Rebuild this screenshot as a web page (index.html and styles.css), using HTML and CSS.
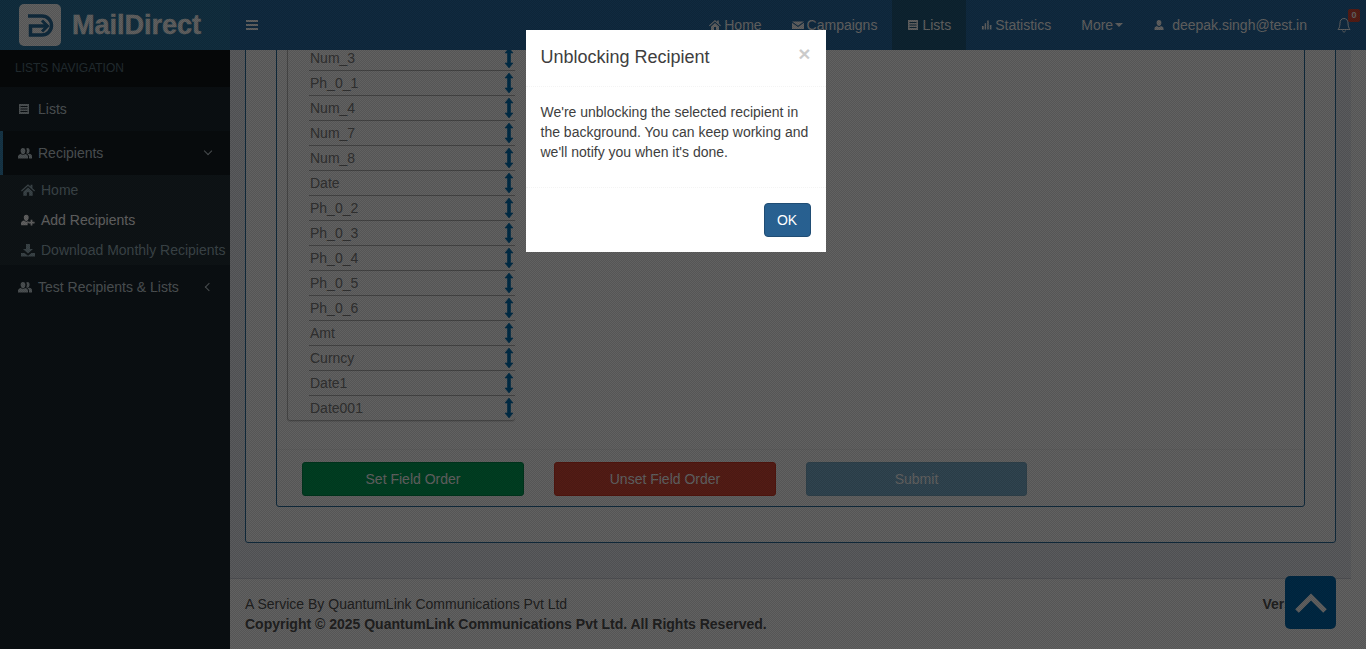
FILE: index.html
```html
<!DOCTYPE html>
<html lang="en">
<head>
    <meta charset="UTF-8">
    <meta name="viewport" content="width=device-width, initial-scale=1.0">
    <title>MailDirect - Lists</title>
    <link rel="stylesheet" href="styles.css">
</head>
<body>

    <svg class="defs" width="0" height="0">
        <symbol id="i-home" viewBox="0 0 12 12"><path d="M6 1 0 6.400l.7.8L6 2.600l5.300 4.600.7-.8L9.800 4.500V1.500H8.200v1.600zM2 7.400V11h3V8h2v3h3V7.400L6 3.900z"/></symbol>
        <symbol id="i-mail" viewBox="0 0 12 12"><path d="M0 2.500h12L6 6.800zM0 3.800V10h12V3.800L6 8.100z"/></symbol>
        <symbol id="i-list" viewBox="0 0 12 12"><path fill-rule="evenodd" d="M1 1h10v10H1zM2.500 3v1h7V3zm0 2.500v1h7v-1zm0 2.500v1h7V8z"/></symbol>
        <symbol id="i-stats" viewBox="0 0 12 12"><path d="M1 7h2v4H1zM4 4h1.600v7H4zM6.800 1h1.600v10H6.800zM9.600 6h1.800v5H9.600z"/></symbol>
        <symbol id="i-user" viewBox="0 0 12 12"><path d="M6 1c1.500 0 2.400 1.100 2.400 2.700S7.400 7 6 7 3.600 5.300 3.600 3.700 4.500 1 6 1zM4 7c.5.600 1.200 1 2 1s1.500-.4 2-1c1.500.4 2.500 1.200 2.500 2.500V11h-9V9.500C1.500 8.200 2.500 7.400 4 7z"/></symbol>
        <symbol id="i-users" viewBox="0 0 14 12"><path d="M5 1c1.500 0 2.400 1.200 2.400 2.800S6.400 7.400 5 7.400 2.600 5.400 2.600 3.800 3.500 1 5 1zM3 7c.5.600 1.200 1 2 1s1.500-.4 2-1c1.800.3 3 1.200 3 2.600V11.500H0V9.600C0 8.200 1.200 7.300 3 7zM9.500 1c1.300 0 2.100 1.100 2.100 2.600 0 1.600-.9 3.200-2.100 3.200-.5 0-.9-.2-1.200-.6.400-.8.600-1.700.6-2.400 0-.8-.2-1.500-.6-2.100.3-.4.700-.7 1.200-.7zM11 6.700c1.800.3 3 1.100 3 2.500v2.300h-3V9.600c0-1.100-.6-1.900-1.500-2.400.6 0 1.100-.2 1.500-.5z"/></symbol>
        <symbol id="i-adduser" viewBox="0 0 16 14"><path d="M6 1c1.700 0 2.800 1.300 2.800 3S7.600 8 6 8 3.200 5.900 3.200 4 4.300 1 6 1zM3.500 7.700C4.100 8.400 5 8.900 6 8.900s1.500-.3 2-.8c.2.300.6.600 1 .8v1.300H7.600V13H1c-.6 0-1-.4-1-1v-1c0-1.800 1.500-3 3.500-3.300zM11 9V6.800h2V9h2.500v2H13v2.400h-2V11H8.600V9z"/></symbol>
        <symbol id="i-download" viewBox="0 0 14 14"><path d="M5 1h4v5h3L7 10.500 2 6h3zM0 10h3.500L7 12.800 10.500 10H14v3.500H0z"/></symbol>
        <symbol id="i-move" viewBox="0 0 10 20"><path d="M5 0 9 5H6.500v10H9l-4 5-4-5h2.500V5H1z"/></symbol>
    </svg>

    <header class="topbar">
        <div class="brand">
            <svg class="brand-mark" viewBox="0 0 42 42">
                <rect width="42" height="42" rx="5" fill="#fff"/>
                <path d="M9 12H23a9.500 9.500 0 0 1 0 19H11.500V22H27" fill="none" stroke="#2a6f9f" stroke-width="3.500"/>
                <path d="M23 16.500 28.500 22 23 27.500" fill="none" stroke="#2a6f9f" stroke-width="3"/>
            </svg>
            <span class="brand-name">MailDirect</span>
        </div>
        <nav class="topnav">
            <button class="burger"><span></span><span></span><span></span></button>
            <ul class="nav-links">
                <li><svg class="ico"><use href="#i-home"/></svg>Home</li>
                <li><svg class="ico"><use href="#i-mail"/></svg>Campaigns</li>
                <li class="on"><svg class="ico"><use href="#i-list"/></svg>Lists</li>
                <li><svg class="ico thin"><use href="#i-stats"/></svg>Statistics</li>
                <li>More<i class="caret"></i></li>
                <li class="who"><svg class="ico"><use href="#i-user"/></svg>deepak.singh@test.in</li>
                <li class="bell">
                    <svg viewBox="0 0 14 16" width="14" height="16"><path d="M7 1.500c-2.600 0-4 2-4 4.500 0 3-.7 5-2 6.500h12c-1.300-1.500-2-3.500-2-6.500 0-2.500-1.400-4.500-4-4.500zM5.500 13.500c.2 1 .8 1.500 1.500 1.500s1.300-.5 1.500-1.500" fill="none" stroke="currentColor"/></svg>
                    <span class="badge">0</span>
                </li>
            </ul>
        </nav>
    </header>

    <div class="wrap">
        <aside class="sidebar">
            <div class="side-title">LISTS NAVIGATION</div>
            <a class="side-item"><svg class="ico"><use href="#i-list"/></svg>Lists</a>
            <a class="side-item active"><svg class="ico wide"><use href="#i-users"/></svg>Recipients<i class="chev down"></i></a>
            <div class="side-sub">
                <a><svg class="ico wide"><use href="#i-home"/></svg>Home</a>
                <a class="lit"><svg class="ico wide"><use href="#i-adduser"/></svg>Add Recipients</a>
                <a><svg class="ico wide"><use href="#i-download"/></svg>Download Monthly Recipients</a>
            </div>
            <a class="side-item"><svg class="ico wide"><use href="#i-users"/></svg>Test Recipients &amp; Lists<i class="chev left"></i></a>
        </aside>

        <div class="right">
            <main class="content">
                <div class="panel">
                    <div class="inner">
                        <ul class="field-list">
                            <li>Num_3<svg class="move"><use href="#i-move"/></svg></li>
                            <li>Ph_0_1<svg class="move"><use href="#i-move"/></svg></li>
                            <li>Num_4<svg class="move"><use href="#i-move"/></svg></li>
                            <li>Num_7<svg class="move"><use href="#i-move"/></svg></li>
                            <li>Num_8<svg class="move"><use href="#i-move"/></svg></li>
                            <li>Date<svg class="move"><use href="#i-move"/></svg></li>
                            <li>Ph_0_2<svg class="move"><use href="#i-move"/></svg></li>
                            <li>Ph_0_3<svg class="move"><use href="#i-move"/></svg></li>
                            <li>Ph_0_4<svg class="move"><use href="#i-move"/></svg></li>
                            <li>Ph_0_5<svg class="move"><use href="#i-move"/></svg></li>
                            <li>Ph_0_6<svg class="move"><use href="#i-move"/></svg></li>
                            <li>Amt<svg class="move"><use href="#i-move"/></svg></li>
                            <li>Curncy<svg class="move"><use href="#i-move"/></svg></li>
                            <li>Date1<svg class="move"><use href="#i-move"/></svg></li>
                            <li>Date001<svg class="move"><use href="#i-move"/></svg></li>
                        </ul>
                        <div class="actions">
                            <button class="btn green">Set Field Order</button>
                            <button class="btn red">Unset Field Order</button>
                            <button class="btn blue">Submit</button>
                        </div>
                    </div>
                </div>
            </main>
            <footer class="foot">
                <div>
                    <div>A Service By QuantumLink Communications Pvt Ltd</div>
                    <strong>Copyright © 2025 QuantumLink Communications Pvt Ltd. All Rights Reserved.</strong>
                </div>
                <strong>Version</strong>
            </footer>
        </div>
    </div>

    <a class="to-top"><svg viewBox="0 0 32 20" width="32" height="20"><path d="M2 18 16 4l14 14" fill="none" stroke="currentColor" stroke-width="5"/></svg></a>

    <div class="backdrop">
        <div class="modal">
            <div class="modal-head">
                <h4>Unblocking Recipient</h4>
                <span class="close">×</span>
            </div>
            <div class="modal-body">
                <p>We're unblocking the selected recipient in the background. You can keep working and we'll notify you when it's done.</p>
            </div>
            <div class="modal-foot">
                <button class="ok">OK</button>
            </div>
        </div>
    </div>

</body>
</html>
```

FILE: styles.css
```css
*{
    margin: 0;padding:0;box-sizing:border-box
}
html,body{
    height:100%;
    overflow:hidden;
}
body{
    font-family:"Liberation Sans",Arial,sans-serif;
    font-size:14px;
    line-height:20px;
    color:#555;
    background:#fff;
}
ul{list-style:none}
a{display:block}
.defs{position:absolute}

/* top bar */
.topbar{
    display:flex;
    height:50px;
    position:relative;
    z-index:2;
}
.brand{
    width:230px;
    display:flex;
    align-items:center;
    padding-left:19px;
    gap:11px;
    background:#2f7aa5;
}
.brand-mark{width:42px;height:42px}
.brand-name{
    font-size:27px;
    font-weight:bold;
    color:#fff;
    -webkit-text-stroke:.4px #fff;
}
.topnav{
    flex:1;
    display:flex;
    align-items:center;
    justify-content:space-between;
    background:#2a6fa8;
}
.burger{
    width:44px;
    height:50px;
    background:none;
    border:none;
    display:flex;
    flex-direction:column;
    justify-content:center;
    align-items:center;
    gap:2px;
}
.burger span{width:12px;height:2px;background:#fff}
.nav-links{
    display:flex;
    height:50px;
    color:#fff;
}
.nav-links li{
    display:flex;
    align-items:center;
    padding:0 15px;
    gap:3px;
}
.nav-links .on{background:#245f80}
.nav-links .who{padding-right:15px;gap:7px}
.ico{width:12px;height:12px;fill:currentColor;flex:none}
.ico.thin{width:11px}
.caret{
    border-top:4px solid;
    border-left:4px solid transparent;
    border-right:4px solid transparent;
    margin-left:-1px;
}
.bell{position:relative;padding-right:15px !important;width:44px}
.badge{
    position:absolute;
    top:9px;
    left:26px;
    width:12px;
    height:13px;
    background:#dd4b39;
    border-radius:2px;
    font-size:9px;
    line-height:13px;
    font-weight:bold;
    text-align:center;
}

/* sidebar + page */
.wrap{
    display:flex;
    height:599px;
}
.sidebar{
    width:230px;
    flex:none;
    background:#1c2830;
    color:#c5d2d8;
}
.side-title{
    height:37px;
    padding:8px 15px 0;
    font-size:12px;
    line-height:20px;
    color:#5b747f;
    background:#10161a;
}
.side-item{
    height:44px;
    display:flex;
    align-items:center;
    padding-left:18px;
    gap:8px;
    position:relative;
}
.side-item .wide{width:14px;margin-right:-2px}
.side-item.active{
    background:#161e24;
    border-left:3px solid #3c8dbc;
    padding-left:15px;
}
.chev{
    position:absolute;
    right:19px;
    top:19px;
    width:6px;
    height:6px;
    border-left:1.500px solid;
    border-bottom:1.500px solid;
}
.chev.down{transform:rotate(-45deg);top:17px}
.chev.left{transform:rotate(45deg);right:18px}
.side-sub{
    background:#26333a;
    height:90px;
    color:#9ab2bc;
}
.side-sub a{
    height:30px;
    display:flex;
    align-items:center;
    padding-left:21px;
    gap:6px;
    white-space:nowrap;
}
.side-sub .wide{width:14px;height:14px}
.side-sub .lit{color:#fff}

.right{
    flex:1;
    min-width:0;
    overflow:hidden;
}
.content{
    width:1121px;
    height:529px;
    padding:0 15px;
    background:#ecf0f5;
    border-bottom:1px solid #d2d6de;
    overflow:hidden;
}
.panel{
    margin-top:-20px;
    height:513px;
    background:#fff;
    border:1px solid #2a6f9f;
    border-radius:3px;
    padding:0 30px;
}
.inner{
    height:477px;
    border:1px solid #2a6f9f;
    border-radius:3px;
    padding:15px 10px 0;
    margin-top:-1px;
}
.field-list{
    width:228px;
    padding-left:21px;
    color:#808080;
    border-left:1px solid #bbb;
    border-radius:0 0 3px 3px;
    box-shadow:inset 0 -1px 0 #bbb,0 1px 1px rgba(0,0,0,.1);
}
.field-list li{
    height:25px;
    display:flex;
    align-items:center;
    justify-content:space-between;
    padding-left:1px;
    border-bottom:1px solid #b4b4b4;
}
.field-list li:last-child{border-bottom-color:transparent}
.move{width:10px;height:20px;fill:#0073b7;stroke:#0073b7;stroke-width:.6;margin-right:1px}
.actions{
    display:flex;
    gap:30px;
    margin:28px -10px 0;
    padding:12px 25px 0;
    border-top:1px solid #f4f4f4;
}
.btn{
    width:222px;
    height:34px;
    border:1px solid;
    border-radius:3px;
    color:#fff;
    font:14px "Liberation Sans",Arial,sans-serif;
}
.green{background:#00a65a;border-color:#008d4c}
.red{background:#dd4b39;border-color:#d73925}
.blue{background:#3c8dbc;border-color:#367fa9;opacity:.65;width:221px}

.foot{
    display:flex;
    justify-content:space-between;
    padding:15px 53px 0 15px;
}

.to-top{
    position:fixed;
    left:1285px;
    top:576px;
    width:51px;
    height:53px;
    background:#006bb0;
    border-radius:5px;
    color:#fff;
    display:flex;
    align-items:center;
    justify-content:center;
}

/* modal */
.backdrop{
    position:fixed;
    inset:0;
    z-index:5;
    padding-right:15px;
    background-color:rgba(0,0,0,.62);
    background-image:repeating-conic-gradient(rgba(0,0,0,.12) 0 25%,transparent 0 50%);
    background-size:2px 2px;
}
.modal{
    width:300px;
    margin:30px auto 0;
    background:#fff;
    color:#3e3e3e;
}
.modal-head{
    padding:15px;
    border-bottom:1px dotted #f4f4f4;
    display:flex;
    justify-content:space-between;
    height:57px;
}
.modal-head h4{
    font-size:18px;
    font-weight:normal;
    line-height:25px;
}
.close{
    font-size:21px;
    font-weight:bold;
    line-height:18px;
    color:#000;
    opacity:.2;
}
.modal-body{padding:15px 15px 25px}
.modal-foot{
    padding:15px;
    border-top:1px dotted #f4f4f4;
    display:flex;
    justify-content:flex-end;
}
.ok{
    width:47px;
    height:34px;
    background:#286090;
    border:1px solid #204d74;
    border-radius:4px;
    color:#fff;
    font:14px "Liberation Sans",Arial,sans-serif;
}
```
